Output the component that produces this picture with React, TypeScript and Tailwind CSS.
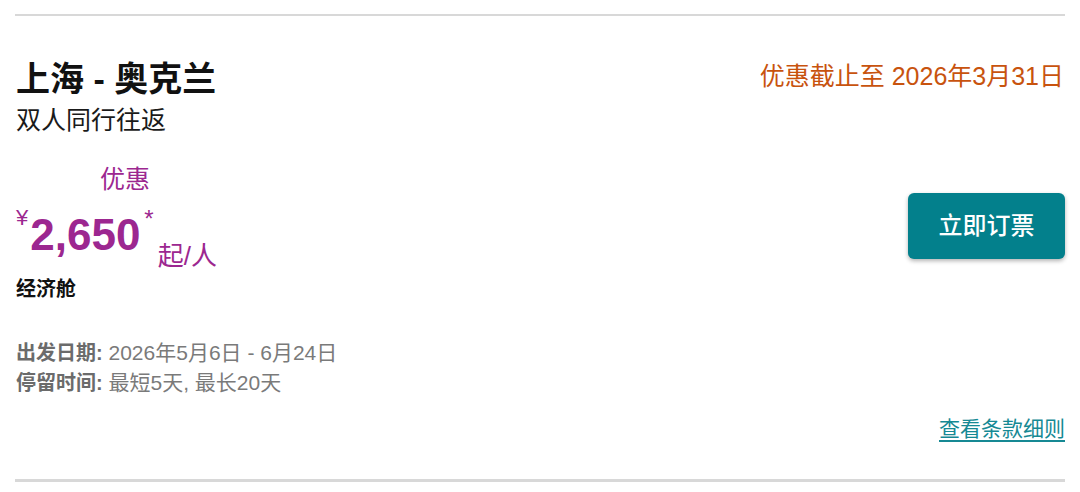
const font = { fontFamily: '"Liberation Sans", "Noto Sans CJK SC", sans-serif' };

export default function App() {
  return (
    <div className="w-[1080px] h-[492px] bg-white pt-[14px] px-[15px]" style={font}>
      <div className="border-t-2 border-b-[3px] border-[#d8d8d8] h-[468px] flex flex-col">
        <div className="flex justify-between">
          {/* left: route and price */}
          <div className="pl-px pt-[42px]">
            <h1 className="text-[34px] leading-[42px] font-bold text-[#111]">上海 - 奥克兰</h1>
            <p className="text-[25px] leading-[32px] text-[#1a1a1a] mt-[4px]">双人同行往返</p>

            <p className="text-[25px] leading-[32px] text-[#9c2790] mt-[27px] pl-[84px]">优惠</p>
            <div className="flex items-start text-[#9c2790] mt-[16px]">
              <span className="text-[22px] leading-[22px] -mt-[4px] mr-[2px]">¥</span>
              <span className="text-[44px] leading-[48px] font-bold">2,650</span>
              <span className="text-[24px] leading-[24px] -mt-[4px] ml-[4px]">*</span>
              <span className="text-[26px] leading-[32px] mt-[29px] ml-[4px]">起/人</span>
            </div>
            <p className="text-[20px] leading-[26px] font-bold text-[#111] mt-[4px]">经济舱</p>

            <div className="mt-[36px] text-[21px] leading-[30px] text-[#7a7a7a]">
              <p>
                <span className="text-[20px] font-bold text-[#6b6b6b]">出发日期:</span> 2026年5月6日 - 6月24日
              </p>
              <p>
                <span className="text-[20px] font-bold text-[#6b6b6b]">停留时间:</span> 最短5天, 最长20天
              </p>
            </div>
          </div>

          {/* right: deadline and CTA */}
          <div className="flex flex-col items-end pt-[44px]">
            <p className="text-[25px] leading-[32px] text-[#c8530e] pr-px">优惠截止至 2026年3月31日</p>
            <button className="mt-[101px] w-[157px] h-[66px] rounded-[6px] bg-[#03808c] text-white text-[24px] font-medium shadow-[0_2px_4px_rgba(0,0,0,0.3)]">
              立即订票
            </button>
          </div>
        </div>

        <div className="flex justify-end mt-[16px]">
          <a href="#" className="text-[21px] leading-[30px] text-[#168994] underline underline-offset-[4px]">
            查看条款细则
          </a>
        </div>
      </div>
    </div>
  );
}
